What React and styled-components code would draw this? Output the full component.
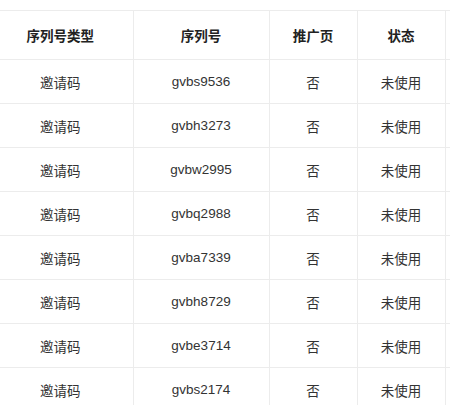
import styled, { createGlobalStyle } from "styled-components";

const GlobalStyle = createGlobalStyle`
  html, body {
    margin: 0;
    padding: 0;
    background: #ffffff;
    overflow: hidden;
  }
  body {
    font-family: "Liberation Sans", "Noto Sans CJK SC", sans-serif;
  }
`;

const rows = [
  "gvbs9536",
  "gvbh3273",
  "gvbw2995",
  "gvbq2988",
  "gvba7339",
  "gvbh8729",
  "gvbe3714",
  "gvbs2174",
];

const Wrap = styled.div`
  padding-top: 10px;
  width: 450px;
  overflow: hidden;
`;

const Table = styled.table`
  border-collapse: collapse;
  table-layout: fixed;
  width: 600px;
  border-top: 1px solid #ececec;
`;

const Col = styled.col`
  width: ${(p) => p.$w}px;
`;

const Th = styled.th`
  height: 48px;
  padding: 0 ${(p) => (p.$first ? "12px" : "0")} 0 0;
  font-size: 13.5px;
  font-weight: 700;
  color: #222222;
  text-align: center;
  border-right: 1px solid #ececec;
  border-bottom: 1px solid #ececec;
`;

const Td = styled.td`
  height: 43px;
  padding: 0 ${(p) => (p.$first ? "12px" : "0")} 0 0;
  font-size: 13.5px;
  color: #333333;
  text-align: center;
  border-right: 1px solid #ececec;
  border-bottom: 1px solid #ececec;
`;

export default function App() {
  return (
    <>
      <GlobalStyle />
      <Wrap>
        <Table>
          <colgroup>
            <Col $w={133} />
            <Col $w={136} />
            <Col $w={88} />
            <Col $w={88} />
            <Col $w={155} />
          </colgroup>
          <thead>
            <tr>
              <Th $first>序列号类型</Th>
              <Th>序列号</Th>
              <Th>推广页</Th>
              <Th>状态</Th>
              <Th />
            </tr>
          </thead>
          <tbody>
            {rows.map((code) => (
              <tr key={code}>
                <Td $first>邀请码</Td>
                <Td>{code}</Td>
                <Td>否</Td>
                <Td>未使用</Td>
                <Td />
              </tr>
            ))}
          </tbody>
        </Table>
      </Wrap>
    </>
  );
}
